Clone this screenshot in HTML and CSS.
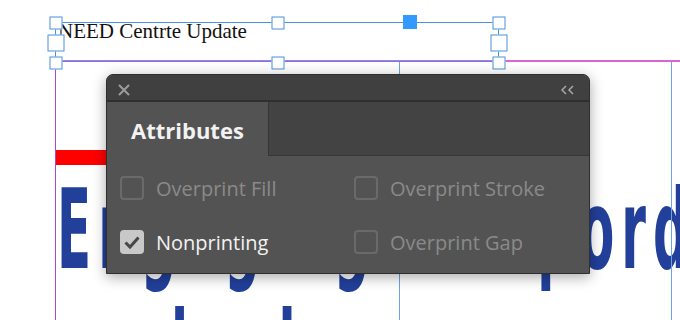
FILE: index.html
```html
<!DOCTYPE html>
<html lang="en">
<head>
    <meta charset="UTF-8">
    <title>Attributes</title>
    <link rel="stylesheet" href="styles.css">
</head>
<body>
    <div class="spread">
        <div class="red-bar"></div>
        <div class="headline">Engaging Shopord<br>acclueing</div>

        <div class="guide guide-top"></div>
        <div class="guide guide-left"></div>
        <div class="guide guide-col col-a"></div>
        <div class="guide guide-col col-b"></div>

        <div class="frame"></div>
        <div class="frame-text">NEED Centrte Update</div>
        <span class="handle h-tl"></span>
        <span class="handle h-tm"></span>
        <span class="handle h-tr"></span>
        <span class="handle handle-port"></span>
        <span class="handle handle-mid h-ml"></span>
        <span class="handle handle-mid h-mr"></span>
        <span class="handle h-bl"></span>
        <span class="handle h-bm"></span>
        <span class="handle h-br"></span>
    </div>

    <div class="panel">
        <div class="panel-bar">
            <svg class="panel-close" width="12" height="12" viewBox="0 0 12 12">
                <path d="M1 1 L11 11 M11 1 L1 11" />
            </svg>
            <svg class="panel-collapse" width="14" height="10" viewBox="0 0 14 10">
                <polyline points="5,1 1,5 5,9" />
                <polyline points="12,1 8,5 12,9" />
            </svg>
        </div>
        <div class="tabs">
            <div class="tab active">Attributes</div>
            <div class="tab-rest"></div>
        </div>
        <div class="attrs">
            <label class="attr disabled"><span class="box"></span><span class="attr-label">Overprint Fill</span></label>
            <label class="attr disabled"><span class="box"></span><span class="attr-label">Overprint Stroke</span></label>
            <label class="attr">
                <span class="box checked">
                    <svg width="24" height="24" viewBox="0 0 24 24"><polyline points="5.5,12.5 10,17 18.5,7.5" /></svg>
                </span>
                <span class="attr-label">Nonprinting</span>
            </label>
            <label class="attr disabled"><span class="box"></span><span class="attr-label">Overprint Gap</span></label>
        </div>
    </div>
</body>
</html>
```

FILE: styles.css
```css
:root {
    --frame-blue: #4a92dc;
    --guide-blue: #6ca3e6;
    --margin-pink: #d864d8;
    --margin-purple: #a349d4;
    --ink-blue: #22409a;
    --panel-bg: #535353;
    --panel-bar: #404040;
    --panel-tab-off: #434343;
    --panel-line: #2f2f2f;
    --text-on: #f2f2f2;
    --text-off: #8a8a8a;
}

body {
    margin: 0;
    width: 680px;
    height: 320px;
    overflow: hidden;
    position: relative;
    background: #fff;
    font-family: "Open Sans", sans-serif;
}

/* document canvas */
.spread {
    position: absolute;
    inset: 0;
    overflow: hidden;
}

.red-bar {
    position: absolute;
    left: 56px;
    top: 150px;
    width: 360px;
    height: 15px;
    background: #ff0000;
}

.headline {
    position: absolute;
    left: 57px;
    top: 169px;
    font-family: "DejaVu Sans", sans-serif;
    font-weight: bold;
    font-size: 111px;
    line-height: 122px;
    letter-spacing: 15.6px;
    word-spacing: 20.7px;
    color: var(--ink-blue);
    white-space: nowrap;
    transform: scaleX(0.45);
    transform-origin: 0 0;
}

.guide {
    position: absolute;
}

.guide-top {
    left: 55px;
    top: 60px;
    width: 625px;
    height: 2px;
    background: var(--margin-pink);
}

.guide-left {
    left: 55px;
    top: 62px;
    width: 1px;
    bottom: 0;
    background: var(--margin-purple);
}

.guide-col {
    top: 62px;
    width: 1px;
    bottom: 0;
    background: var(--guide-blue);
}

.col-a { left: 399px; }
.col-b { left: 671px; }

.frame {
    position: absolute;
    left: 55px;
    top: 22px;
    width: 442px;
    height: 38px;
    border: 1px solid var(--frame-blue);
}

.frame-text {
    position: absolute;
    left: 58px;
    top: 19px;
    font-family: "Liberation Serif", "Times New Roman", serif;
    font-size: 21px;
    line-height: 24px;
    color: #111;
    white-space: nowrap;
}

.handle {
    position: absolute;
    width: 13px;
    height: 13px;
    box-sizing: border-box;
    border: 1.5px solid var(--frame-blue);
    background: #fff;
    transform: translate(-50%, -50%);
}

.handle-mid {
    width: 17px;
    height: 17px;
}

.handle-port {
    left: 410px;
    top: 22px;
    width: 14px;
    height: 14px;
    border: none;
    background: #3399ff;
}

.h-tl { left: 55.5px; top: 22.5px; }
.h-tm { left: 278px; top: 22.5px; }
.h-tr { left: 498.5px; top: 22.5px; }
.h-ml { left: 55.5px; top: 42.5px; }
.h-mr { left: 498.5px; top: 42.5px; }
.h-bl { left: 55.5px; top: 62.5px; }
.h-bm { left: 278px; top: 62.5px; }
.h-br { left: 498.5px; top: 62.5px; }

/* floating attributes panel */
.panel {
    position: absolute;
    left: 106px;
    top: 74px;
    width: 484px;
    height: 200px;
    box-sizing: border-box;
    border: 1px solid var(--panel-line);
    border-radius: 7px 7px 0 0;
    background: var(--panel-bg);
    box-shadow: 0 3px 14px rgba(0, 0, 0, 0.35);
    display: flex;
    flex-direction: column;
    overflow: hidden;
}

.panel-bar {
    height: 27px;
    flex: none;
    display: flex;
    align-items: center;
    justify-content: space-between;
    padding: 4px 14px 0 11px;
    box-sizing: border-box;
    background: var(--panel-bar);
    border-bottom: 2px solid var(--panel-line);
}

.panel-close path {
    stroke: #9c9c9c;
    stroke-width: 2;
    fill: none;
}

.panel-collapse polyline {
    stroke: #a8a8a8;
    stroke-width: 1.5;
    fill: none;
}

.tabs {
    display: flex;
    height: 54px;
    flex: none;
}

.tab {
    width: 161px;
    box-sizing: border-box;
    padding: 13px 0 0 24px;
    font-weight: 700;
    font-size: 22px;
    line-height: 30px;
    color: var(--text-on);
    background: var(--panel-bg);
}

.tab-rest {
    flex: 1;
    background: var(--panel-tab-off);
    border-left: 1px solid #363636;
    border-bottom: 1px solid #363636;
}

.attrs {
    display: grid;
    grid-template-columns: 234px 1fr;
    row-gap: 28px;
    padding: 20px 0 0 13px;
}

.attr {
    display: flex;
    align-items: flex-start;
    gap: 12px;
}

.box {
    width: 24px;
    height: 24px;
    flex: none;
    box-sizing: border-box;
    border: 2px solid #6a6a6a;
    border-radius: 4px;
}

.box.checked {
    border: none;
    background: #c8c8c8;
}

.box.checked polyline {
    stroke: #474747;
    stroke-width: 3;
    fill: none;
}

.attr-label {
    font-size: 20px;
    line-height: 26px;
    color: var(--text-on);
    white-space: nowrap;
}

.attr.disabled .attr-label {
    color: var(--text-off);
}
```
